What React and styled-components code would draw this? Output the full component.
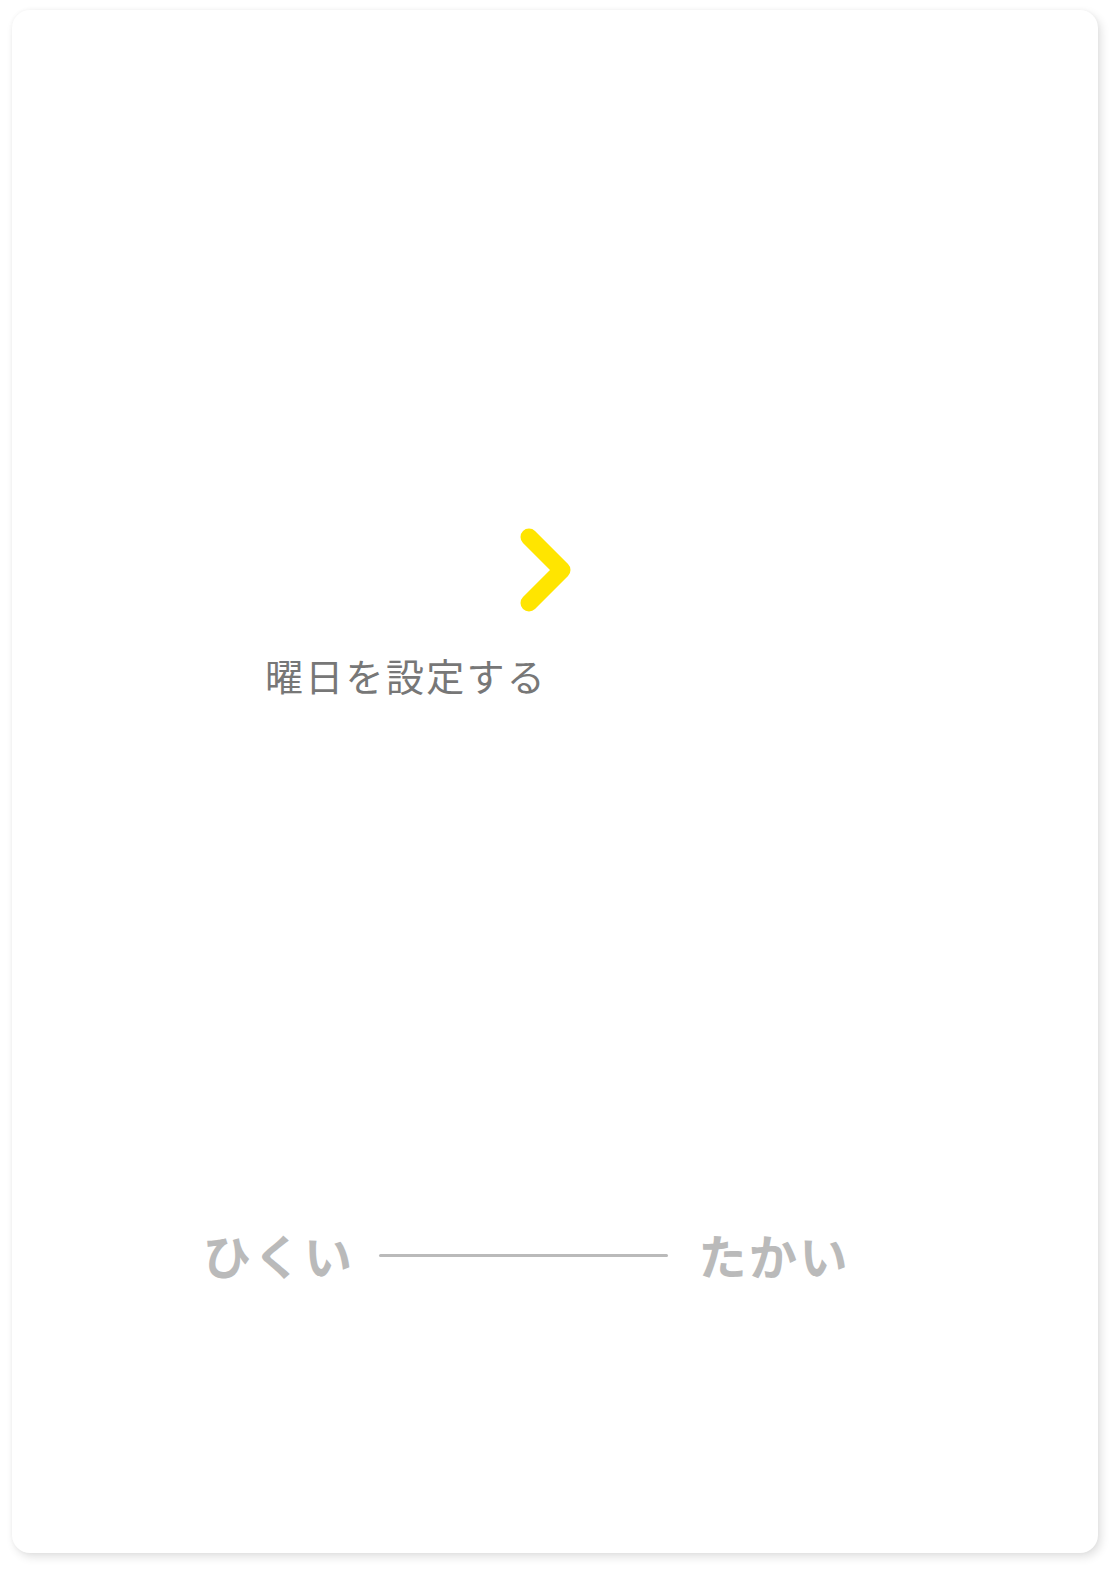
import React from 'react';
import styled, { createGlobalStyle } from 'styled-components';

const GlobalStyle = createGlobalStyle`
  html, body {
    margin: 0;
    padding: 0;
    background: #ffffff;
  }
  body {
    font-family: "Noto Sans CJK JP", "Noto Sans", sans-serif;
  }
`;

const Page = styled.div`
  width: 1116px;
  height: 1574px;
  padding: 10px 18px 21px 12px;
  box-sizing: border-box;
`;

const Card = styled.div`
  height: 100%;
  background: #fff;
  border-radius: 18px;
  box-shadow: 3px 4px 10px rgba(0, 0, 0, 0.12), 0 0 4px rgba(0, 0, 0, 0.04);
  display: flex;
  flex-direction: column;
`;

const DaySetting = styled.div`
  display: flex;
  flex-direction: column;
  padding-top: 512px;
`;

const Chevron = styled.svg`
  display: block;
  margin-left: 503px;
  width: 60px;
  height: 96px;
`;

const Label = styled.div`
  margin: 33px 0 0 253px;
  font-size: 38px;
  line-height: 48px;
  letter-spacing: 2.3px;
  color: #777;
  font-weight: 400;
`;

const Scale = styled.div`
  margin-top: auto;
  margin-bottom: 269px;
  display: flex;
  align-items: center;
  padding-left: 191px;
`;

const ScaleText = styled.span`
  font-size: 48px;
  line-height: 60px;
  font-weight: 700;
  color: #bababa;
  letter-spacing: 2.5px;
`;

const ScaleLine = styled.div`
  width: 289px;
  height: 3px;
  background: #bababa;
  border-radius: 2px;
  margin: 2px 31px 0 24px;
`;

export default function App() {
  return (
    <>
      <GlobalStyle />
      <Page>
        <Card>
          <DaySetting>
            <Chevron viewBox="0 0 60 96">
              <path
                d="M14 15 L47 48 L14 81"
                fill="none"
                stroke="#ffe500"
                strokeWidth="17"
                strokeLinecap="round"
                strokeLinejoin="round"
              />
            </Chevron>
            <Label>曜日を設定する</Label>
          </DaySetting>
          <Scale>
            <ScaleText>ひくい</ScaleText>
            <ScaleLine />
            <ScaleText>たかい</ScaleText>
          </Scale>
        </Card>
      </Page>
    </>
  );
}
